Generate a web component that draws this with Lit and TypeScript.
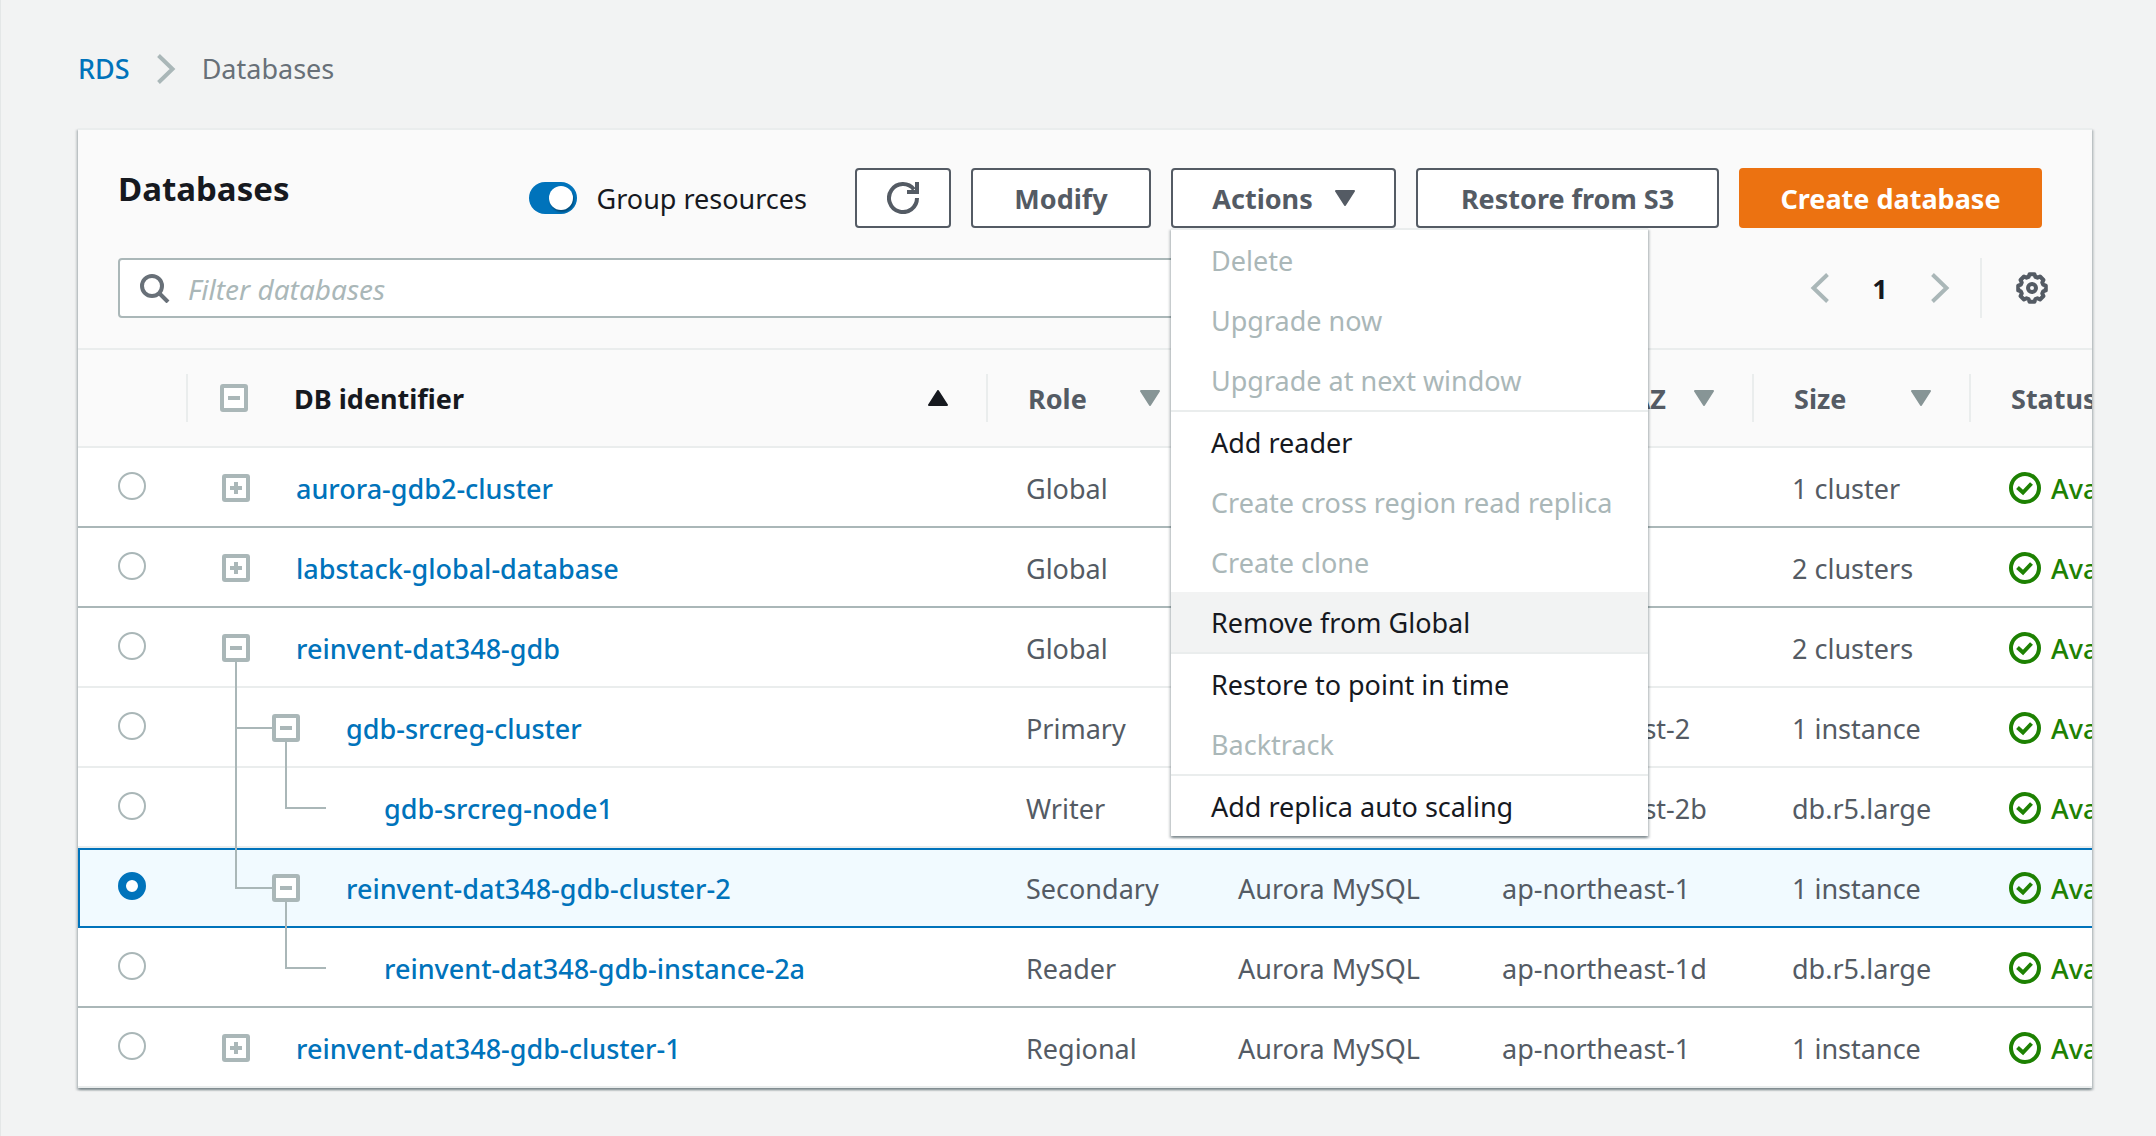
import { LitElement, html, svg, css, nothing } from "lit";
import { customElement, state } from "lit/decorators.js";
import { classMap } from "lit/directives/class-map.js";

interface Resource {
  id: string;
  level: 0 | 1 | 2;
  toggle?: "plus" | "minus";
  guide?: string;
  groupEnd?: boolean;
  role: string;
  engine: string;
  region: string;
  size: string;
}

interface MenuItem {
  label: string;
  enabled?: boolean;
  active?: boolean;
}

const RESOURCES: Resource[] = [
  { id: "aurora-gdb2-cluster", level: 0, toggle: "plus", groupEnd: true, role: "Global", engine: "", region: "", size: "1 cluster" },
  { id: "labstack-global-database", level: 0, toggle: "plus", groupEnd: true, role: "Global", engine: "", region: "", size: "2 clusters" },
  { id: "reinvent-dat348-gdb", level: 0, toggle: "minus", guide: "M48 54V80", role: "Global", engine: "", region: "", size: "2 clusters" },
  { id: "gdb-srcreg-cluster", level: 1, toggle: "minus", guide: "M48 0V80M48 40H84M98 54V80", role: "Primary", engine: "", region: "ap-northeast-2", size: "1 instance" },
  { id: "gdb-srcreg-node1", level: 2, guide: "M48 0V80M98 0V40H138", role: "Writer", engine: "", region: "ap-northeast-2b", size: "db.r5.large" },
  { id: "reinvent-dat348-gdb-cluster-2", level: 1, toggle: "minus", guide: "M48 0V40H84M98 54V80", role: "Secondary", engine: "Aurora MySQL", region: "ap-northeast-1", size: "1 instance" },
  { id: "reinvent-dat348-gdb-instance-2a", level: 2, guide: "M98 0V40H138", groupEnd: true, role: "Reader", engine: "Aurora MySQL", region: "ap-northeast-1d", size: "db.r5.large" },
  { id: "reinvent-dat348-gdb-cluster-1", level: 0, toggle: "plus", role: "Regional", engine: "Aurora MySQL", region: "ap-northeast-1", size: "1 instance" },
];

const MENU: MenuItem[][] = [
  [{ label: "Delete" }, { label: "Upgrade now" }, { label: "Upgrade at next window" }],
  [
    { label: "Add reader", enabled: true },
    { label: "Create cross region read replica" },
    { label: "Create clone" },
    { label: "Remove from Global", enabled: true, active: true },
  ],
  [{ label: "Restore to point in time", enabled: true }, { label: "Backtrack" }],
  [{ label: "Add replica auto scaling", enabled: true }],
];

/* Outline of an eight-toothed wheel centred in a 32px box. */
function gearPath(): string {
  const at = (deg: number, r: number) => {
    const a = (deg * Math.PI) / 180;
    return `${(16 + r * Math.sin(a)).toFixed(2)} ${(16 - r * Math.cos(a)).toFixed(2)}`;
  };
  const points: string[] = [];
  for (let i = 0; i < 8; i++) {
    const d = i * 45;
    points.push(at(d - 10, 14), at(d + 10, 14), at(d + 17, 11.6), at(d + 28, 11.6));
  }
  return `M${points.join("L")}Z`;
}

const chevron = (dir: "left" | "right") => html`
  <svg class="stroke muted" width="20" height="32" viewBox="0 0 20 32" aria-hidden="true">
    <path d=${dir === "right" ? "M2.5 2.5 16.5 16 2.5 29.5" : "M17.5 2.5 3.5 16 17.5 29.5"}></path>
  </svg>`;

const caret = (up = false) => html`
  <svg class="caret" width="20" height="16" viewBox="0 0 20 16" aria-hidden="true">
    <path d=${up ? "M10 1 19 15H1Z" : "M10 15 1 1H19Z"}></path>
  </svg>`;

const box = (kind: "plus" | "minus") => html`
  <svg class="stroke muted" width="28" height="28" viewBox="0 0 28 28" aria-hidden="true">
    <rect x="2" y="2" width="24" height="24" rx="1" fill="#fff"></rect>
    <path d="M8 14H20"></path>
    ${kind === "plus" ? svg`<path d="M14 8V20"></path>` : nothing}
  </svg>`;

@customElement("app-root")
export class AppRoot extends LitElement {
  @state() private selected = "reinvent-dat348-gdb-cluster-2";
  @state() private grouped = true;
  @state() private menuOpen = true;

  static styles = css`
    :host {
      display: block;
      box-sizing: border-box;
      min-height: 100vh;
      padding: 50px 64px 40px 77px;
      border-left: 1px solid #e4e7e7;
      background: #f2f3f3;
      color: #16191f;
      font: 27px/38px "Noto Sans", "Open Sans", sans-serif;
    }
    * { box-sizing: border-box; }
    svg { display: block; flex: none; }
    a { color: #0073bb; font-weight: 500; text-decoration: none; }
    button, input { margin: 0; font: inherit; color: inherit; }
    .text { display: block; padding-top: 2px; }
    .stroke { fill: none; stroke: currentColor; stroke-width: 4; }
    .muted { color: #aab7b8; }
    .caret {
      fill: currentColor;
      stroke: currentColor;
      stroke-width: 2;
      stroke-linejoin: round;
    }

    .crumbs { display: flex; align-items: center; gap: 26px; color: #687078; }

    .card {
      margin-top: 40px;
      border-top: 2px solid #eaeded;
      background: #fff;
      box-shadow: 0 2px 2px rgba(0, 28, 36, 0.3), 2px 2px 2px rgba(0, 28, 36, 0.15),
        -2px 2px 2px rgba(0, 28, 36, 0.15);
    }
    .head {
      display: grid;
      gap: 30px;
      padding: 38px 50px 30px 40px;
      border-bottom: 2px solid #eaeded;
      background: #fafafa;
    }
    .bar { display: flex; align-items: center; gap: 20px; }
    h1 { flex: 1; align-self: flex-start; margin: 0; font-size: 33px; line-height: 42px; font-weight: 700; }

    .switch { display: flex; align-items: center; gap: 20px; margin-right: 28px; white-space: nowrap; }
    .switch input {
      display: flex;
      appearance: none;
      width: 48px;
      height: 32px;
      padding: 4px;
      border-radius: 16px;
      background: #879596;
    }
    .switch input::before {
      content: "";
      width: 24px;
      height: 24px;
      border-radius: 50%;
      background: #fff;
      box-shadow: 1px 2px 2px rgba(0, 0, 0, 0.35);
    }
    .switch input:checked { justify-content: flex-end; background: #0073bb; }

    .btn {
      display: flex;
      align-items: center;
      justify-content: center;
      gap: 22px;
      height: 60px;
      padding: 0 30px;
      border: 2px solid #545b64;
      border-radius: 4px;
      background: #fff;
      color: #545b64;
      font-weight: 700;
      white-space: nowrap;
    }
    .small { min-width: 96px; }
    .medium { min-width: 180px; }
    .drop { min-width: 225px; }
    .large { min-width: 303px; }
    .primary { border-color: #ec7211; background: #ec7211; color: #fff; }

    .actions { position: relative; }
    .menu {
      position: absolute;
      z-index: 2;
      top: 100%;
      left: 0;
      min-width: 477px;
      border-top: 2px solid #eaeded;
      background: #fff;
      box-shadow: 0 2px 2px rgba(0, 28, 36, 0.3), 2px 2px 2px rgba(0, 28, 36, 0.15),
        -2px 2px 2px rgba(0, 28, 36, 0.15);
    }
    .group + .group { border-top: 2px solid #eaeded; }
    .item {
      display: block;
      width: 100%;
      height: 60px;
      padding: 2px 34px 0 40px;
      border: 0;
      background: none;
      text-align: left;
      white-space: nowrap;
    }
    .item:disabled { color: #aab7b8; }
    .item.active { background: #f2f3f3; }

    .filter {
      display: flex;
      align-items: center;
      gap: 18px;
      flex: 0 1 75%;
      height: 60px;
      padding: 0 20px;
      border: 2px solid #aab7b8;
      border-radius: 4px;
      background: #fff;
    }
    .filter svg { color: #687078; }
    .filter input { flex: 1; min-width: 0; padding: 2px 0 0; border: 0; outline: 0; background: none; font-size: 28px; }
    .filter input::placeholder { color: #aab7b8; font-style: italic; opacity: 1; }
    .pager { display: flex; align-items: center; height: 60px; margin: 0 -6px 0 auto; }
    .bare { display: block; padding: 0; border: 0; background: none; color: #545b64; }
    .page { width: 100px; text-align: center; font-weight: 700; }
    .prefs { display: flex; align-items: center; height: 60px; margin-left: 30px; padding-left: 34px; border-left: 2px solid #eaeded; }

    .scroll { overflow: hidden; }
    table { width: 100%; min-width: 2100px; table-layout: fixed; border-spacing: 0; color: #545b64; }
    .c-pick { width: 110px; }
    .c-id { width: 800px; }
    .c-role { width: 212px; }
    .c-engine { width: 264px; }
    .c-region { width: 290px; }
    .c-size { width: 217px; }
    th { padding: 24px 0; border-bottom: 2px solid #eaeded; background: #fafafa; text-align: left; font-weight: 700; }
    .cell {
      display: flex;
      align-items: center;
      justify-content: space-between;
      height: 48px;
      padding: 0 38px 0 40px;
      border-right: 2px solid #eaeded;
      white-space: nowrap;
    }
    .cell .caret { color: #879596; }
    .cell.sorted { gap: 46px; padding-left: 32px; color: #16191f; }
    .cell.sorted .text { flex: 1; }
    .cell.sorted .caret { color: #16191f; }

    td {
      height: 80px;
      padding: 2px 0 0 38px;
      box-shadow: inset 0 -2px #eaeded;
      white-space: nowrap;
    }
    .end td { box-shadow: inset 0 -2px #aab7b8; }
    .picked td { background: #f1faff; box-shadow: inset 0 2px #0073bb, inset 0 -2px #0073bb; }
    .picked td:first-child { box-shadow: inset 0 2px #0073bb, inset 0 -2px #0073bb, inset 2px 0 #0073bb; }
    td.pick { padding: 0 0 4px 40px; }
    .pick input {
      display: block;
      appearance: none;
      width: 28px;
      height: 28px;
      border: 2px solid #aab7b8;
      border-radius: 50%;
      background: #fff;
    }
    .pick input:checked { border: 8px solid #0073bb; }

    td.tree { position: relative; padding: 0; }
    .guide { position: absolute; top: 0; left: 0; stroke: #aab7b8; stroke-width: 2; fill: none; }
    .node { position: relative; display: flex; align-items: center; gap: 46px; padding-left: 34px; }
    .level1 { padding-left: 84px; }
    .level2 { padding-left: 196px; }

    td.state { padding-top: 0; }
    .status { display: flex; align-items: center; gap: 10px; color: #1d8102; font-weight: 500; }
  `;

  private renderMenu() {
    return html`<div class="menu" role="menu">
      ${MENU.map(
        (group) => html`<div class="group" role="group">
          ${group.map(
            (item) => html`<button
              class=${classMap({ item: true, active: !!item.active })}
              type="button"
              role="menuitem"
              ?disabled=${!item.enabled}
            >${item.label}</button>`
          )}
        </div>`
      )}
    </div>`;
  }

  private renderHead() {
    return html`<div class="head">
      <div class="bar">
        <h1>Databases</h1>
        <label class="switch">
          <input type="checkbox" role="switch" .checked=${this.grouped}
            @change=${() => (this.grouped = !this.grouped)} />
          <span class="text">Group resources</span>
        </label>
        <button class="btn small" type="button" aria-label="Refresh">
          <svg class="stroke" width="32" height="32" viewBox="0 0 32 32" aria-hidden="true">
            <path d="M30 16A14 14 0 1 1 27 7.400M30 0V10H20"></path>
          </svg>
        </button>
        <button class="btn medium" type="button"><span class="text">Modify</span></button>
        <div class="actions">
          <button class="btn drop" type="button" aria-haspopup="menu" aria-expanded=${this.menuOpen}
            @click=${() => (this.menuOpen = !this.menuOpen)}><span class="text">Actions</span>${caret()}</button>
          ${this.menuOpen ? this.renderMenu() : nothing}
        </div>
        <button class="btn large" type="button"><span class="text">Restore from S3</span></button>
        <button class="btn large primary" type="button"><span class="text">Create database</span></button>
      </div>
      <div class="bar">
        <label class="filter">
          <svg class="stroke" width="30" height="30" viewBox="0 0 30 30" aria-hidden="true">
            <circle cx="12" cy="13" r="10"></circle>
            <path d="M19 20 28 29"></path>
          </svg>
          <input type="text" placeholder="Filter databases" aria-label="Filter databases" />
        </label>
        <div class="pager">
          <button class="bare" type="button" aria-label="Previous page">${chevron("left")}</button>
          <span class="text page">1</span>
          <button class="bare" type="button" aria-label="Next page">${chevron("right")}</button>
          <div class="prefs">
            <button class="bare" type="button" aria-label="Preferences">
              <svg class="stroke" width="32" height="32" viewBox="0 0 32 32" stroke-linejoin="round" aria-hidden="true">
                <path d=${gearPath()}></path>
                <circle cx="16" cy="16" r="4"></circle>
              </svg>
            </button>
          </div>
        </div>
      </div>
    </div>`;
  }

  private renderRow(r: Resource) {
    const picked = r.id === this.selected;
    return html`<tr class=${classMap({ end: !!r.groupEnd, picked })}>
      <td class="pick">
        <input type="radio" name="db" aria-label=${r.id} .checked=${picked}
          @change=${() => (this.selected = r.id)} />
      </td>
      <td class="tree">
        ${r.guide
          ? html`<svg class="guide" width="150" height="80" viewBox="0 0 150 80" aria-hidden="true"><path d=${r.guide}></path></svg>`
          : nothing}
        <div class="node level${r.level}">
          ${r.toggle
            ? html`<button class="bare" type="button" aria-label=${r.toggle === "plus" ? "Expand" : "Collapse"}>${box(r.toggle)}</button>`
            : nothing}
          <a class="text" href="#${r.id}">${r.id}</a>
        </div>
      </td>
      <td>${r.role}</td>
      <td>${r.engine}</td>
      <td>${r.region}</td>
      <td>${r.size}</td>
      <td class="state">
        <div class="status">
          <svg class="stroke" width="32" height="32" viewBox="0 0 32 32" aria-hidden="true">
            <circle cx="16" cy="16" r="14"></circle>
            <path d="M8.500 15.500 14 20.500 22.500 11.500"></path>
          </svg>
          <span class="text">Available</span>
        </div>
      </td>
    </tr>`;
  }

  render() {
    return html`
      <nav class="crumbs" aria-label="Breadcrumbs">
        <a href="#rds">RDS</a>${chevron("right")}<span>Databases</span>
      </nav>
      <section class="card">
        ${this.renderHead()}
        <div class="scroll">
          <table>
            <colgroup>
              <col class="c-pick" /><col class="c-id" /><col class="c-role" /><col class="c-engine" />
              <col class="c-region" /><col class="c-size" /><col />
            </colgroup>
            <thead>
              <tr>
                <th><div class="cell"></div></th>
                <th>
                  <div class="cell sorted">
                    <button class="bare" type="button" aria-label="Collapse all">${box("minus")}</button>
                    <span class="text">DB identifier</span>${caret(true)}
                  </div>
                </th>
                ${["Role", "Engine", "Region & AZ", "Size", "Status"].map(
                  (name) => html`<th><div class="cell"><span class="text">${name}</span>${caret()}</div></th>`
                )}
              </tr>
            </thead>
            <tbody>${RESOURCES.map((r) => this.renderRow(r))}</tbody>
          </table>
        </div>
      </section>
    `;
  }
}
